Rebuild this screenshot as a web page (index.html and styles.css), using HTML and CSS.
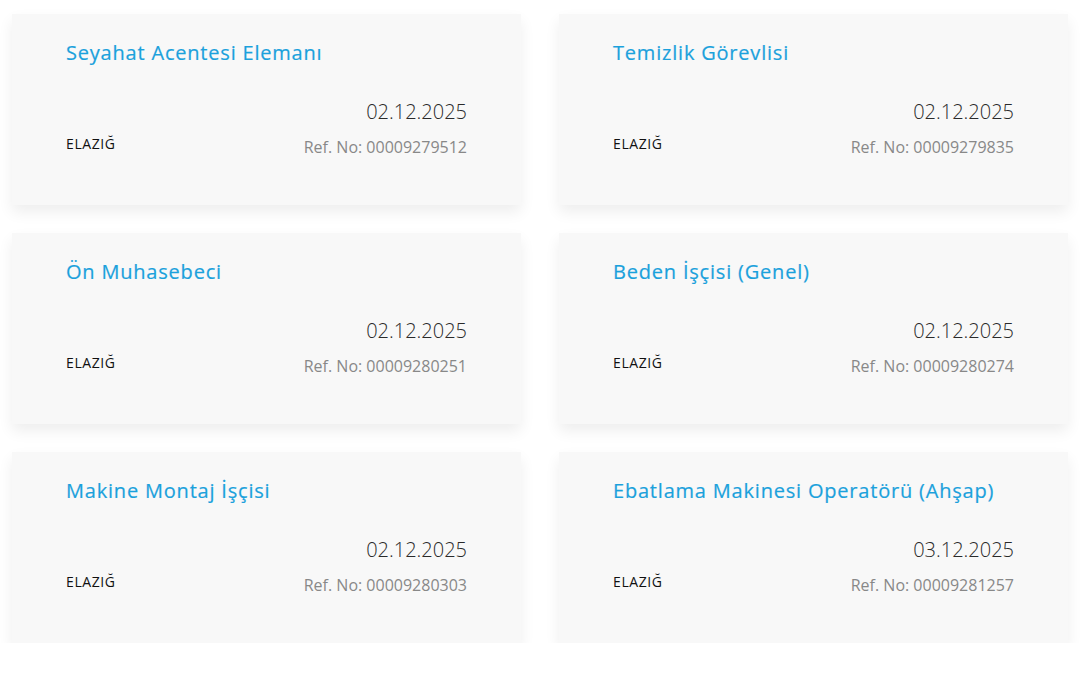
FILE: index.html
```html
<!DOCTYPE html>
<html lang="tr">
<head>
<meta charset="utf-8">
<title>İlanlar</title>
<link rel="stylesheet" href="styles.css">
</head>
<body>
<div class="grid">
  <div class="card">
    <div class="title">Seyahat Acentesi Elemanı</div>
    <div class="meta">
      <div class="city">ELAZIĞ</div>
      <div class="right"><div class="date">02.12.2025</div><div class="ref">Ref. No: 00009279512</div></div>
    </div>
  </div>
  <div class="card">
    <div class="title">Temizlik Görevlisi</div>
    <div class="meta">
      <div class="city">ELAZIĞ</div>
      <div class="right"><div class="date">02.12.2025</div><div class="ref">Ref. No: 00009279835</div></div>
    </div>
  </div>
  <div class="card">
    <div class="title">Ön Muhasebeci</div>
    <div class="meta">
      <div class="city">ELAZIĞ</div>
      <div class="right"><div class="date">02.12.2025</div><div class="ref">Ref. No: 00009280251</div></div>
    </div>
  </div>
  <div class="card">
    <div class="title">Beden İşçisi (Genel)</div>
    <div class="meta">
      <div class="city">ELAZIĞ</div>
      <div class="right"><div class="date">02.12.2025</div><div class="ref">Ref. No: 00009280274</div></div>
    </div>
  </div>
  <div class="card">
    <div class="title">Makine Montaj İşçisi</div>
    <div class="meta">
      <div class="city">ELAZIĞ</div>
      <div class="right"><div class="date">02.12.2025</div><div class="ref">Ref. No: 00009280303</div></div>
    </div>
  </div>
  <div class="card">
    <div class="title">Ebatlama Makinesi Operatörü (Ahşap)</div>
    <div class="meta">
      <div class="city">ELAZIĞ</div>
      <div class="right"><div class="date">03.12.2025</div><div class="ref">Ref. No: 00009281257</div></div>
    </div>
  </div>
</div>
</body>
</html>
```

FILE: styles.css
```css
html, body {
  margin: 0;
  padding: 0;
  background: #ffffff;
}
body {
  font-family: "Open Sans", "Noto Sans", sans-serif;
}
.grid {
  display: grid;
  grid-template-columns: 509px 509px;
  column-gap: 38px;
  row-gap: 28px;
  padding: 14px 0 0 12px;
}
.card {
  height: 191px;
  box-sizing: border-box;
  background: #f8f8f8;
  box-shadow: 0 7px 14px rgba(0, 0, 0, 0.07);
  padding: 26px 54px 0 54px;
  display: flex;
  flex-direction: column;
}
.title {
  color: #1ba1dc;
  font-size: 20px;
  font-weight: 500;
  line-height: 26px;
  letter-spacing: 0.8px;
  -webkit-text-stroke: 0.2px #1ba1dc;
}
.meta {
  display: flex;
  justify-content: space-between;
  align-items: flex-end;
  margin-top: 32px;
}
.city {
  font-size: 14px;
  color: #111;
  line-height: 20px;
  letter-spacing: 0.6px;
  margin-bottom: 4px;
}
.right {
  text-align: right;
}
.date {
  font-size: 20px;
  font-weight: 300;
  color: #2a2a2a;
  line-height: 28px;
}
.ref {
  font-size: 16px;
  color: #888;
  line-height: 22px;
  margin-top: 10px;
}
```
